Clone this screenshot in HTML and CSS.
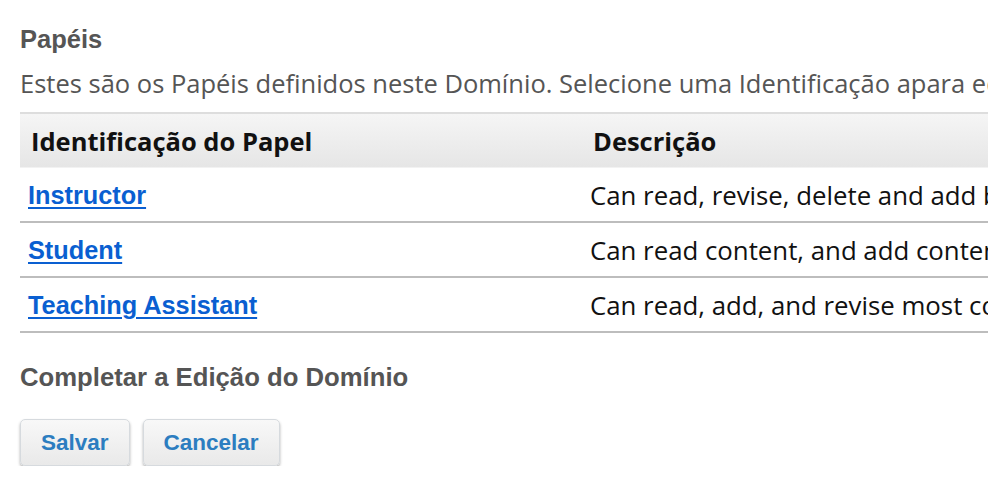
FILE: index.html
```html
<!DOCTYPE html>
<html lang="pt">
<head>
<meta charset="utf-8">
<title>Papéis</title>
<link rel="stylesheet" href="styles.css">
</head>
<body>
<main class="page">
  <h2 class="section-title">Papéis</h2>
  <p class="intro">Estes são os Papéis definidos neste Domínio. Selecione uma Identificação apara editar ou excluir o Papel.</p>
  <table class="roles">
    <thead>
      <tr>
        <th class="col-id">Identificação do Papel</th>
        <th class="col-desc">Descrição</th>
      </tr>
    </thead>
    <tbody>
      <tr>
        <td class="col-id"><a href="#">Instructor</a></td>
        <td class="col-desc">Can read, revise, delete and add both content and users.</td>
      </tr>
      <tr>
        <td class="col-id"><a href="#">Student</a></td>
        <td class="col-desc">Can read content, and add content to certain areas.</td>
      </tr>
      <tr>
        <td class="col-id"><a href="#">Teaching Assistant</a></td>
        <td class="col-desc">Can read, add, and revise most content.</td>
      </tr>
    </tbody>
  </table>
  <h2 class="section-title complete">Completar a Edição do Domínio</h2>
  <div class="actions">
    <button class="btn" type="button">Salvar</button>
    <button class="btn" type="button">Cancelar</button>
  </div>
</main>
</body>
</html>
```

FILE: styles.css
```css
html, body {
  margin: 0;
  padding: 0;
  background: #ffffff;
  overflow: hidden;
}

.page {
  padding: 25px 0 0 20px;
  width: 1400px;
}

.section-title {
  margin: 0;
  font-family: "Liberation Sans", Arial, sans-serif;
  font-weight: bold;
  font-size: 25.5px;
  line-height: 28px;
  color: #555555;
}

.intro {
  margin: 15px 0 0 0;
  font-family: "Open Sans", sans-serif;
  font-size: 25.5px;
  line-height: 30px;
  color: #555555;
  white-space: nowrap;
}

.roles {
  margin-top: 14px;
  width: 1300px;
  border-collapse: collapse;
  font-family: "Open Sans", sans-serif;
}

.roles thead th {
  height: 53px;
  padding: 0;
  text-align: left;
  font-weight: bold;
  font-size: 25.5px;
  line-height: 30px;
  color: #111111;
  background: linear-gradient(#f5f5f5, #e6e6e6);
  border-top: 2px solid #dddddd;
  border-bottom: 1px solid #f2f2f2;
  vertical-align: middle;
  white-space: nowrap;
}

.roles thead th.col-id {
  padding-left: 11px;
  width: 559px;
}

.roles thead th.col-desc {
  padding-left: 3px;
}

.roles tbody td {
  height: 53px;
  padding: 0;
  font-size: 25.8px;
  line-height: 30px;
  color: #111111;
  border-bottom: 2px solid #bdbdbd;
  vertical-align: middle;
  white-space: nowrap;
}

.roles tbody td.col-id {
  padding-left: 8px;
}

.roles tbody td a {
  font-family: "Liberation Sans", Arial, sans-serif;
  font-weight: bold;
  font-size: 25.3px;
  line-height: 30px;
  color: #0a5fd1;
  text-decoration: underline;
  text-decoration-thickness: 2px;
  text-underline-offset: 3px;
}

.complete {
  margin-top: 30px;
  font-size: 25.7px;
}

.actions {
  display: flex;
  gap: 13px;
  margin-top: 28px;
}

.btn {
  font-family: "Liberation Sans", Arial, sans-serif;
  font-weight: bold;
  font-size: 22.5px;
  color: #2c7dc0;
  height: 47px;
  padding: 0 20px;
  border: 1px solid #d6dade;
  border-radius: 5px;
  background: linear-gradient(#f8f8f8, #e9e9e9);
  box-shadow: 0 2px 3px rgba(0, 0, 0, 0.3);
  cursor: pointer;
}
```
